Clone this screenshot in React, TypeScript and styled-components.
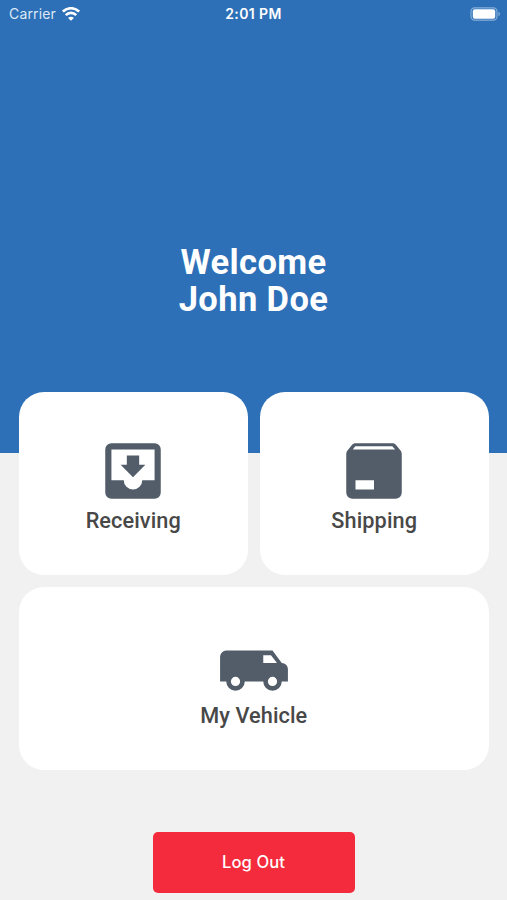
import React from "react";
import styled, { createGlobalStyle } from "styled-components";

const GlobalStyle = createGlobalStyle`
  * { box-sizing: border-box; }
  html, body { margin: 0; padding: 0; }
  body { background: #f1f1f1; font-family: Roboto, sans-serif; overflow: hidden; }
`;

const Screen = styled.main`
  display: flex;
  flex-direction: column;
  height: 900px;
  background: linear-gradient(#2d70b7 453px, #f1f1f1 453px);
`;

const StatusBar = styled.header`
  display: grid;
  grid-template-columns: 1fr auto 1fr;
  align-items: center;
  height: 27px;
  padding: 0 6px 0 9px;
  color: #fff;
  font-family: Inter, sans-serif;
  font-size: 14px;
`;

const Carrier = styled.div`
  display: flex;
  align-items: center;
  gap: 6px;
  color: #dce8f5;
  letter-spacing: 0.15px;
`;

const Clock = styled.time`
  margin-left: -3px;
  font-size: 14px;
  font-weight: 600;
  letter-spacing: 0.4px;
`;

const BatteryIcon = styled.svg`
  justify-self: end;
`;

const Greeting = styled.h1`
  height: 365px;
  margin: 0;
  padding-top: 217px;
  color: #fff;
  font-size: 34.5px;
  font-weight: 700;
  line-height: 37px;
  letter-spacing: 0.4px;
  text-align: center;
`;

const Menu = styled.nav`
  display: grid;
  grid-template-columns: 1fr 1fr;
  grid-auto-rows: 183px;
  gap: 12.4px;
  padding: 0 18.5px 0 19px;
`;

const Card = styled.button<{ $wide?: boolean }>`
  display: flex;
  flex-direction: column;
  align-items: center;
  grid-column: ${({ $wide }) => ($wide ? "1 / -1" : "auto")};
  padding: 41.5px 0 0;
  border: 0;
  border-radius: 25px;
  background: #fff;
  color: #484848;
`;

const CardIcon = styled.svg`
  flex: none;
  width: 74px;
  height: 74px;
  fill: #525d69;
`;

const CardLabel = styled.span`
  margin-top: 0.1px;
  font-family: Roboto, sans-serif;
  font-size: 21.7px;
  font-weight: 500;
  line-height: 26px;
  letter-spacing: 0.1px;
`;

const LogOut = styled.button`
  align-self: center;
  width: 202px;
  height: 61px;
  margin-top: 61.6px;
  padding: 0 0 1px;
  border: 0;
  border-radius: 5px;
  background: #f42b3d;
  color: #fff;
  font-family: Inter, sans-serif;
  font-size: 16.6px;
  font-weight: 550;
  letter-spacing: 0.1px;
`;

const items = [
  {
    label: "Receiving",
    path: "M16 10h-2V7h-4v3H8l4 4 4-4m3 5h-4a3 3 0 0 1-6 0H5V5h14v10m0-12H5a2 2 0 0 0-2 2v14a2 2 0 0 0 2 2h14a2 2 0 0 0 2-2V5a2 2 0 0 0-2-2z",
  },
  {
    label: "Shipping",
    path: "M5.12 5h13.75l-.94-1h-12l-.81 1m15.42.23c.29.34.46.77.46 1.27V19a2 2 0 0 1-2 2H5a2 2 0 0 1-2-2V6.5c0-.5.17-.93.46-1.27l1.38-1.68C5.12 3.21 5.53 3 6 3h12c.47 0 .88.21 1.15.55l1.39 1.68M6 18h6v-3H6v3z",
  },
  {
    label: "My Vehicle",
    wide: true,
    path: "M3 7a2 2 0 0 0-2 2v8h2a3 3 0 0 0 6 0h6a3 3 0 0 0 6 0h2v-4a2 2 0 0 0-2-2l-3-4H3m12 1.5h2.5l1.96 2.5H15V8.5M6 15.5a1.5 1.5 0 1 1 0 3 1.5 1.5 0 0 1 0-3m12 0a1.5 1.5 0 1 1 0 3 1.5 1.5 0 0 1 0-3z",
  },
];

export default function App() {
  return (
    <Screen>
      <GlobalStyle />
      <StatusBar>
        <Carrier>
          <span>Carrier</span>
          <svg width="18" height="14" viewBox="0 0 18 14" fill="none" stroke="#fff" strokeWidth="2.7">
            <path d="M.9 4.6a11.5 11.5 0 0 1 16.2 0M3.8 8.1a7.4 7.4 0 0 1 10.4 0" />
            <path d="M9 13.8l-2.9-2.9a4 4 0 0 1 5.8 0z" fill="#fff" stroke="none" />
          </svg>
        </Carrier>
        <Clock>2:01 PM</Clock>
        <BatteryIcon width="31" height="14" viewBox="0 0 31 14">
          <rect x="1" y=".8" width="26" height="12.4" rx="3.6" fill="none" stroke="#86afd9" strokeWidth="1.2" />
          <rect x="2.8" y="2.3" width="22.4" height="9.4" rx="2" fill="#fff" />
          <path d="M28.5 4.8c2 .8 2 3.6 0 4.4z" fill="#86afd9" />
        </BatteryIcon>
      </StatusBar>
      <Greeting>
        Welcome
        <br />
        John Doe
      </Greeting>
      <Menu>
        {items.map(({ label, path, wide }) => (
          <Card key={label} $wide={wide}>
            <CardIcon viewBox="0 0 24 24" aria-hidden="true">
              <path fillRule="evenodd" d={path} />
            </CardIcon>
            <CardLabel>{label}</CardLabel>
          </Card>
        ))}
      </Menu>
      <LogOut>Log Out</LogOut>
    </Screen>
  );
}
